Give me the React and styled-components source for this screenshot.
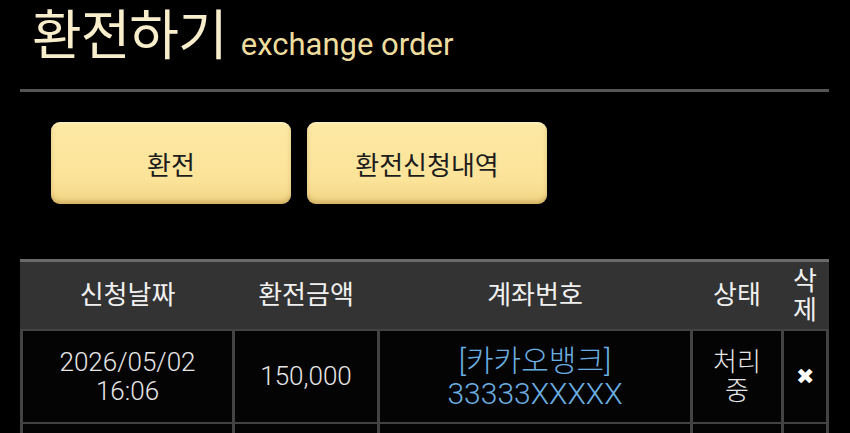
import React from 'react';
import styled, { createGlobalStyle } from 'styled-components';

const GlobalStyle = createGlobalStyle`
    html, body {
        margin: 0;
        padding: 0;
        background: #000;
        overflow: hidden;
    }
    body {
        font-family: Roboto, "Noto Sans CJK KR", sans-serif;
        color: #e8e8e8;
    }
`;

const Page = styled.div`
    padding: 0 21px 0 20px;
`;

const TitleBar = styled.header`
    display: flex;
    align-items: baseline;
    gap: 14px;
    height: 92px;
    padding-left: 12px;
    box-sizing: border-box;
    border-bottom: 3px solid #555;
`;

const Title = styled.h1`
    margin: 0;
    font-size: 54px;
    font-weight: 400;
    line-height: 74px;
    letter-spacing: -1px;
    color: #f8eecb;
`;

const SubTitle = styled.span`
    font-size: 31px;
    color: #eedd9f;
`;

const ButtonRow = styled.nav`
    display: flex;
    gap: 16px;
    padding: 30px 0 0 31px;
`;

// Yellow tab-like buttons with a soft bevel on the lower edge.
const TabButton = styled.button`
    width: 240px;
    height: 82px;
    border: none;
    border-radius: 9px;
    background: linear-gradient(to bottom, #fde9a4 0%, #fbe399 70%, #f1d485 100%);
    box-shadow: inset 0 -3px 4px rgba(150, 110, 30, 0.35), inset 0 2px 2px rgba(255, 250, 220, 0.5);
    font-family: Roboto, "Noto Sans CJK KR", sans-serif;
    font-size: 26px;
    color: #1c1c1c;
    cursor: pointer;
`;

const Table = styled.div`
    margin-top: 55px;
    display: grid;
    grid-template-columns: 209px 142px 310px 88px 42px;
    column-gap: 3px;
    row-gap: 2px;
    padding: 0 3px;
    background: #434343;
    border-top: 3px solid #6a6a6a;
`;

const HeadCell = styled.div`
    background: #333;
    height: 67px;
    display: flex;
    align-items: center;
    justify-content: center;
    text-align: center;
    font-size: 26px;
    line-height: 29px;
    color: #f0f0f0;
    margin: 0 -3px 0 ${p => p.$first ? '-3px' : '0'};
    padding: 0 3px 0 ${p => p.$first ? '3px' : '0'};
`;

const Cell = styled.div`
    background: #040404;
    height: 91px;
    display: flex;
    flex-direction: column;
    align-items: center;
    justify-content: center;
    text-align: center;
    font-size: ${p => p.$accent ? '30px' : '26px'};
    font-weight: 300;
    line-height: ${p => p.$accent ? '33px' : '29px'};
    color: ${p => p.$accent ? '#6aaee2' : '#e6e6e6'};
`;

const DeleteMark = styled.span`
    font-family: "DejaVu Sans", sans-serif;
    font-size: 22px;
    color: #fff;
`;

const rows = [
    { date: '2026/05/02', time: '16:06', amount: '150,000', bank: '[카카오뱅크]', account: '33333XXXXX', status: ['처리', '중'] },
];

export default function App() {
    return (
        <Page>
            <GlobalStyle />
            <TitleBar>
                <Title>환전하기</Title>
                <SubTitle>exchange order</SubTitle>
            </TitleBar>
            <ButtonRow>
                <TabButton>환전</TabButton>
                <TabButton>환전신청내역</TabButton>
            </ButtonRow>
            <Table>
                <HeadCell $first>신청날짜</HeadCell>
                <HeadCell>환전금액</HeadCell>
                <HeadCell>계좌번호</HeadCell>
                <HeadCell>상태</HeadCell>
                <HeadCell>삭<br />제</HeadCell>
                {rows.map((r, i) => (
                    <React.Fragment key={i}>
                        <Cell><span>{r.date}</span><span>{r.time}</span></Cell>
                        <Cell>{r.amount}</Cell>
                        <Cell $accent><span>{r.bank}</span><span>{r.account}</span></Cell>
                        <Cell>{r.status.map(s => <span key={s}>{s}</span>)}</Cell>
                        <Cell><DeleteMark>✖</DeleteMark></Cell>
                    </React.Fragment>
                ))}
                {/* next row only shows its top edge in the frame */}
                <Cell /><Cell /><Cell /><Cell /><Cell />
            </Table>
        </Page>
    );
}
